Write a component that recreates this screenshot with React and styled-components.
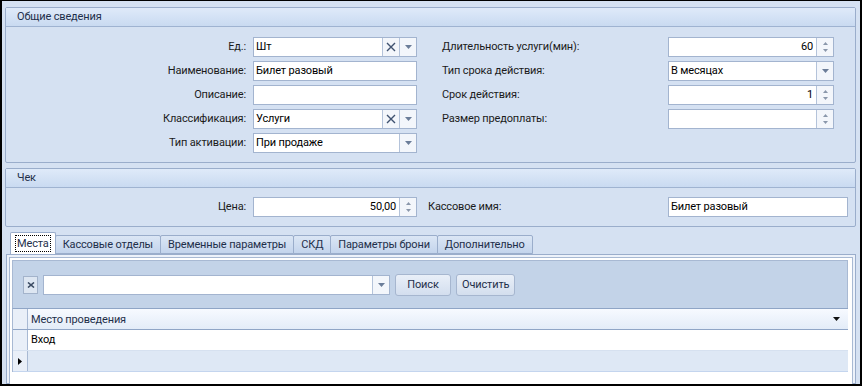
import React from 'react'
import styled, { createGlobalStyle } from 'styled-components'

const Global = createGlobalStyle`
    html, body { margin: 0; padding: 0; }
    body {
        font-family: Roboto, "Noto Sans", sans-serif;
        font-size: 11px;
        letter-spacing: -0.15px;
        color: #1b1b1b;
    }
`

const Arrow = ({ color = '#6b7d99' }) => (
    <svg width="7" height="4" viewBox="0 0 7 4"><path d="M0 0h7L3.5 4z" fill={color} /></svg>
)

const Cross = () => (
    <svg width="10" height="10" viewBox="0 0 10 10">
        <path d="M1 1l8 8M9 1l-8 8" stroke="#3f5270" strokeWidth="1.4" />
    </svg>
)

const SpinIcons = () => (
    <svg width="5" height="12" viewBox="0 0 5 12">
        <path d="M0 4h5L2.5 1z" fill="#8a97ab" />
        <path d="M0 8h5L2.5 11z" fill="#8a97ab" />
    </svg>
)

const Field = ({ value, clear, drop, spin, right }) => (
    <Input>
        <Value right={right}>{value}</Value>
        {clear && <Btn><Cross /></Btn>}
        {drop && <Btn><Arrow /></Btn>}
        {spin && <Btn><SpinIcons /></Btn>}
    </Input>
)

const App = () => {
    return (
        <>
            <Global />
            <Frame>
                <Group>
                    <GroupHead>Общие сведения</GroupHead>
                    <Form>
                        <Label>Ед.:</Label>
                        <Field value="Шт" clear drop />
                        <Label2>Длительность услуги(мин):</Label2>
                        <Field value="60" right spin />

                        <Label>Наименование:</Label>
                        <Field value="Билет разовый" />
                        <Label2>Тип срока действия:</Label2>
                        <Field value="В месяцах" drop />

                        <Label>Описание:</Label>
                        <Field value="" />
                        <Label2>Срок действия:</Label2>
                        <Field value="1" right spin />

                        <Label>Классификация:</Label>
                        <Field value="Услуги" clear drop />
                        <Label2>Размер предоплаты:</Label2>
                        <Field value="" right spin />

                        <Label>Тип активации:</Label>
                        <Field value="При продаже" drop />
                    </Form>
                </Group>

                <Group>
                    <GroupHead>Чек</GroupHead>
                    <CheckForm>
                        <Label>Цена:</Label>
                        <Field value="50,00" right spin />
                        <Label2>Кассовое имя:</Label2>
                        <Field value="Билет разовый" />
                    </CheckForm>
                </Group>

                <Tabs>
                    <Tab active><Focus>Места</Focus></Tab>
                    <Tab>Кассовые отделы</Tab>
                    <Tab>Временные параметры</Tab>
                    <Tab>СКД</Tab>
                    <Tab>Параметры брони</Tab>
                    <Tab>Дополнительно</Tab>
                </Tabs>
                <TabPanel>
                    <Inner>
                        <Toolbar>
                            <SmallBtn>
                                <svg width="8" height="6" viewBox="0 0 8 6"><path d="M1 0.5l6 5M7 0.5l-6 5" stroke="#3b4b63" strokeWidth="1.6" /></svg>
                            </SmallBtn>
                            <Combo>
                                <Value />
                                <Btn><Arrow /></Btn>
                            </Combo>
                            <Button>Поиск</Button>
                            <Button>Очистить</Button>
                        </Toolbar>
                        <Grid>
                            <HeadRow>
                                <Indicator />
                                <HeadCell>
                                    Место проведения
                                    <Arrow color="#111" />
                                </HeadCell>
                            </HeadRow>
                            <Row>
                                <Indicator />
                                <Cell>Вход</Cell>
                            </Row>
                            <Row current>
                                <Indicator>
                                    <svg width="4" height="7" viewBox="0 0 4 7"><path d="M0 0l4 3.5L0 7z" fill="#000" /></svg>
                                </Indicator>
                                <Cell />
                            </Row>
                        </Grid>
                    </Inner>
                </TabPanel>
            </Frame>
        </>
    )
}

export default App

const Frame = styled.div`
    width: 862px;
    height: 386px;
    box-sizing: border-box;
    border: 2px solid #000;
    border-top-width: 1px;
    background: #d5e1f2;
    padding: 6px 4px 0 3px;
    display: flex;
    flex-direction: column;
    overflow: hidden;
`
const Group = styled.div`
    border: 1px solid #9aadcb;
    border-radius: 2px;
    margin-bottom: 5px;
`
const GroupHead = styled.div`
    height: 18px;
    line-height: 18px;
    padding-left: 11px;
    color: #1e2f4a;
    background: linear-gradient(#dfeaf9, #c9daf1);
    border-bottom: 1px solid #9fb3d1;
`
const Form = styled.div`
    display: grid;
    grid-template-columns: 240px 164px 237px 166px;
    column-gap: 7px;
    row-gap: 4px;
    grid-auto-rows: 20px;
    padding: 10px 0 9px 0;
    & > *:nth-child(4n+3) { margin-left: 18px; }
`
const CheckForm = styled.div`
    display: grid;
    grid-template-columns: 240px 164px 237px 180px;
    column-gap: 7px;
    grid-auto-rows: 20px;
    padding: 9px 0 9px 0;
    & > *:nth-child(3) { margin-left: 4px; }
`
const Label = styled.div`
    text-align: right;
    line-height: 20px;
    white-space: nowrap;
`
const Label2 = styled.div`
    line-height: 20px;
    white-space: nowrap;
`
const Input = styled.div`
    display: flex;
    background: #fff;
    border: 1px solid #a3b4cf;
    box-sizing: border-box;
    height: 20px;
`
const Value = styled.div`
    flex: 1;
    padding: 0 3px 0 2px;
    line-height: 18px;
    text-align: ${p => (p.right ? 'right' : 'left')};
    color: #000;
    white-space: nowrap;
`
const Btn = styled.div`
    width: 16px;
    display: flex;
    align-items: center;
    justify-content: center;
    border-left: 1px solid #b4c3da;
    background: #f3f6fb;
`
const Tabs = styled.div`
    display: flex;
    align-items: flex-end;
    padding-left: 6px;
    margin-top: 1px;
    height: 21px;
    position: relative;
    z-index: 1;
`
const Tab = styled.div`
    height: ${p => (p.active ? '22px' : '19px')};
    line-height: 19px;
    padding: 0 ${p => (p.active ? '4px' : '7px')};
    border: 1px solid #9aadcb;
    border-bottom: ${p => (p.active ? 'none' : '1px solid #9aadcb')};
    margin-left: -1px;
    background: ${p => (p.active ? '#fff' : 'linear-gradient(#dbe6f5, #c3d4ec)')};
    color: #1e2f4a;
    box-sizing: border-box;
    border-radius: 2px 2px 0 0;
    display: flex;
    align-items: center;
`
const Focus = styled.span`
    border: 1px dotted #000;
    padding: 0 1px;
    line-height: 15px;
`
const TabPanel = styled.div`
    flex: 1;
    border: 1px solid #9aadcb;
    margin-left: 1px;
    margin-right: 0;
    padding: 2px;
    background: #edf2fa;
`
const Inner = styled.div`
    height: 100%;
    border: 1px solid #a8b9d3;
    box-shadow: inset 0 0 0 1px #fff;
    padding: 2px 4px 0 2px;
    background: #fff;
`
const Toolbar = styled.div`
    display: flex;
    align-items: center;
    gap: 5px;
    height: 47px;
    padding-left: 10px;
    background: #c3d3e8;
    border: 1px solid #a8b9d3;
    border-bottom: none;
`
const SmallBtn = styled.div`
    height: 18px;
    border: 1px solid #a3b3cb;
    background: #dde6f2;
    display: flex;
    align-items: center;
    justify-content: center;
    box-sizing: border-box;
    width: 15px;
`
const Combo = styled(Input)`
    width: 347px;
`
const Button = styled.div`
    height: 22px;
    min-width: 56px;
    line-height: 20px;
    padding: 0 5px;
    text-align: center;
    border: 1px solid #a6b6cf;
    border-radius: 3px;
    background: linear-gradient(#e9eff8, #d3deee);
    box-sizing: border-box;
    color: #1e2f4a;
`
const Grid = styled.div`
    border-left: 1px solid #a8b9d3;
    border-top: 1px solid #8fa5c6;
`
const HeadRow = styled.div`
    display: flex;
    height: 20px;
    border-bottom: 1px solid #8fa5c6;
    background: linear-gradient(#f7faff, #e3ecf8);
`
const Indicator = styled.div`
    width: 14px;
    border-right: 1px solid #a8b9d3;
    display: flex;
    align-items: center;
    justify-content: center;
    background: #e9eff8;
`
const HeadCell = styled.div`
    flex: 1;
    display: flex;
    justify-content: space-between;
    align-items: center;
    padding: 0 8px 0 3px;
    color: #1e2f4a;
`
const Row = styled.div`
    display: flex;
    height: 20px;
    border-bottom: 1px solid ${p => (p.current ? '#c4d5ee' : '#d6e1f0')};
    background: ${p => (p.current ? '#dee8f5' : '#fff')};
`
const Cell = styled.div`
    flex: 1;
    line-height: 20px;
    padding-left: 3px;
    color: #000;
`
